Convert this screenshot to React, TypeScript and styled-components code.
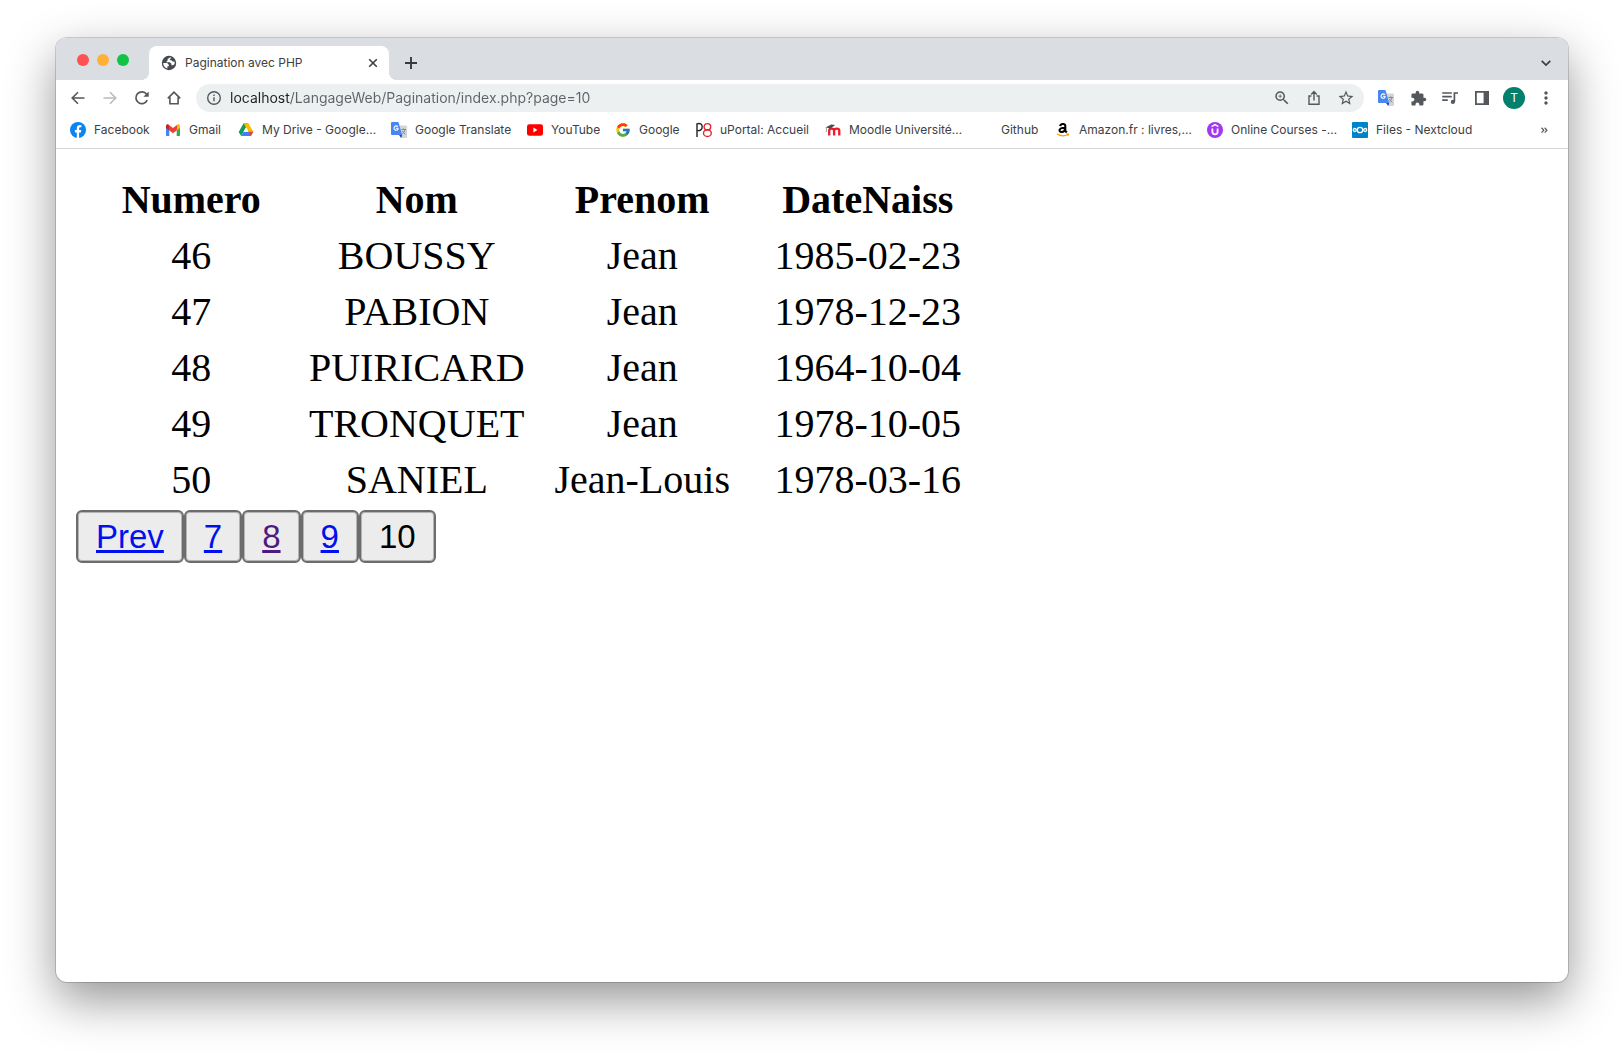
import React from 'react';
import styled, { createGlobalStyle } from 'styled-components';
import { MdExtension, MdMoreVert, MdZoomIn, MdStarBorder } from 'react-icons/md';
import { FcGoogle } from 'react-icons/fc';

const uiFont = `Inter, "Liberation Sans", sans-serif`;

const GlobalStyle = createGlobalStyle`
  *, *::before, *::after { box-sizing: border-box; }
  body { margin: 0; background: #fff; }
  button, input { font: inherit; }
`;

const Desktop = styled.div`
  min-height: 100vh;
  padding: 38px 56px 74px;
  display: flex;
`;

const BrowserWindow = styled.div`
  flex: 1;
  min-width: 0;
  display: flex;
  flex-direction: column;
  border-radius: 11px;
  overflow: hidden;
  background: #fff;
  box-shadow: 0 0 0 1px rgba(0, 0, 0, 0.16), 0 18px 48px rgba(0, 0, 0, 0.42);
  font-family: ${uiFont};
`;

const TabStrip = styled.header`
  display: flex;
  height: 42px;
  padding: 8px 6px 0 21px;
  background: #dadde2;
`;

const WindowControls = styled.div`
  display: flex;
  gap: 8px;
  padding-top: 8px;
  margin-right: 20px;
`;

const ControlDot = styled.button<{ $color: string }>`
  width: 12px;
  height: 12px;
  padding: 0;
  border: 0;
  border-radius: 50%;
  background: ${(p) => p.$color};
`;

const Tab = styled.div`
  position: relative;
  display: flex;
  align-items: center;
  width: 240px;
  height: 34px;
  padding: 0 8px 0 12px;
  gap: 8px;
  border-radius: 8px 8px 0 0;
  background: #fff;

  &::before, &::after {
    content: "";
    position: absolute;
    bottom: 0;
    width: 8px;
    height: 8px;
  }
  &::before {
    right: 100%;
    background: radial-gradient(circle at 0 0, transparent 8px, #fff 8px);
  }
  &::after {
    left: 100%;
    background: radial-gradient(circle at 100% 0, transparent 8px, #fff 8px);
  }
`;

const TabTitle = styled.span`
  flex: 1;
  font-size: 12px;
  line-height: 16px;
  color: #3c4043;
`;

const IconButton = styled.button<{ $size?: number; $color?: string }>`
  display: grid;
  place-items: center;
  flex: none;
  width: ${(p) => p.$size ?? 32}px;
  height: 28px;
  padding: 0;
  border: 0;
  background: none;
  color: ${(p) => p.$color ?? '#54585c'};
`;

const TabButton = styled(IconButton)`
  height: 34px;
`;

const Spacer = styled.div`
  flex: 1;
`;

const Toolbar = styled.div`
  display: flex;
  align-items: center;
  height: 36px;
  padding: 0 6px;
`;

const AddressBar = styled.form`
  flex: 1;
  min-width: 0;
  display: flex;
  align-items: center;
  height: 28px;
  margin: 0 6px;
  padding: 0 2px 0 10px;
  gap: 8px;
  border-radius: 14px;
  background: #edf0f1;
  color: #54585c;
`;

const AddressInput = styled.input`
  flex: 1;
  min-width: 0;
  height: 20px;
  padding: 0;
  border: 0;
  outline: 0;
  font-size: 14px;
  line-height: 20px;
  color: #5f6368;
  background: linear-gradient(to right, #202124 60px, #5f6368 60px);
  background-clip: text;
  -webkit-background-clip: text;
  -webkit-text-fill-color: transparent;
`;

const ActionGroup = styled.div`
  display: flex;
`;

const Avatar = styled.span`
  display: grid;
  place-items: center;
  width: 22px;
  height: 22px;
  border-radius: 50%;
  background: #027f6d;
  color: #fff;
  font-size: 12px;
  line-height: 22px;
`;

const BookmarksBar = styled.nav`
  display: flex;
  align-items: center;
  height: 33px;
  padding: 0 7px 4px 14px;
  border-bottom: 1px solid #d5d7d9;
`;

const Bookmark = styled.a<{ $width: number }>`
  display: flex;
  align-items: center;
  gap: 8px;
  width: ${(p) => p.$width}px;
  font-size: 12px;
  line-height: 16px;
  color: #3c4043;
  text-decoration: none;
  white-space: nowrap;
`;

const BookmarkIcon = styled.span`
  display: grid;
  flex: none;
  width: 16px;
  height: 16px;
`;

const Page = styled.main`
  flex: 1;
  padding: 20px;
  font-family: "Liberation Serif", serif;
  color: #000;
`;

const DataTable = styled.table`
  width: 907px;
  table-layout: fixed;
  border-spacing: 5px;
  font-size: 40px;
  line-height: 46px;
  text-align: center;
`;

const HeadCell = styled.th`
  padding: 3px 0 2px;
`;

const Cell = styled.td`
  padding: 3px 0 2px;
`;

const Pager = styled.nav`
  display: flex;
  font-family: "Liberation Sans", sans-serif;
  font-size: 33px;
  line-height: 38px;
`;

const PagerLink = styled.a<{ $visited?: boolean }>`
  padding: 6px 18px 5px;
  border: 2px solid #6c6c6c;
  border-radius: 6px;
  box-shadow: inset 0 0 0 1px #b4b4b4;
  background: #ececec;
  color: ${(p) => (p.$visited ? '#4f1a80' : '#0010ee')};
  text-decoration: underline;
  text-decoration-thickness: 3px;
`;

const PagerCurrent = styled(PagerLink).attrs({ as: 'button' })`
  color: #000;
  text-decoration: none;
`;

const Line = ({ size = 16, width = 1.6, children }: { size?: number; width?: number; children: React.ReactNode }) => (
  <svg width={size} height={size} viewBox="0 0 16 16" fill="none" stroke="currentColor" strokeWidth={width}>
    {children}
  </svg>
);

const Globe = () => (
  <svg width="16" height="16" viewBox="0 0 16 16">
    <circle cx="8" cy="8" r="7.2" fill="#45494d" />
    <path d="M9.3 2.2 6.6 4v1.5L5 7.2h3.8l1.6 1.5v1.5h1.8l1.3-1.2.3-2.2-2.2-.2-.8-1.2-1.9-.4V4l1.5-1z" fill="#fff" />
    <path d="M2.2 8h3.9l1.7 1.7v1.5H6.4v2.3A5.9 5.9 0 0 1 2.2 8z" fill="#fff" />
  </svg>
);

const FacebookLogo = () => (
  <svg viewBox="0 0 16 16">
    <circle cx="8" cy="8" r="8" fill="#0b84f3" />
    <path d="M6.8 16v-5.5H4.9V8.1h1.9V6.4c0-2.2 1.2-3.3 3.1-3.3l1.5.1v2h-1c-1 0-1.3.6-1.3 1.3v1.6h2.2l-.4 2.4H9.1V16z" fill="#fff" />
  </svg>
);

const GmailLogo = () => (
  <svg viewBox="0 0 16 16">
    <path d="M1 4v9c0 .6.4 1 1 1h2.3V6.6z" fill="#4285f4" />
    <path d="M15 4v9c0 .6-.4 1-1 1h-2.3V6.6z" fill="#34a853" />
    <path d="M11.7 4.3v4.3L15 6V3.9c0-1.6-1.7-2-2.7-1.2z" fill="#fbbc04" />
    <path d="M4.3 8.6V4.3L8 7l3.7-2.7v4.3L8 11.3z" fill="#ea4335" />
    <path d="M1 3.9V6l3.3 2.6V4.3l-.6-1.6C2.6 1.9 1 2.5 1 3.9z" fill="#c5221f" />
    <path d="M3.7 2.7 8 6l4.3-3.3-.6 4.5L8 9.8 4.3 7.2z" fill="#ea4335" />
  </svg>
);

const DriveLogo = () => (
  <svg viewBox="0 0 16 16">
    <path d="M5.6 1.2h4.8L8 5.5 3.1 14 .7 10z" fill="#0f9d58" />
    <path d="M5.6 1.2h4.8l4.9 8.6h-4.8z" fill="#ffba00" />
    <path d="M5.5 9.8h9.8L12.9 14H3.1z" fill="#3f7ef3" />
    <path d="M8 5.5 10.5 9.8h-5z" fill="#fff" />
    <path d="m12.9 14-2.4-4.2h4.8z" fill="#ea4335" />
  </svg>
);

const TranslateLogo = () => (
  <svg width="16" height="16" viewBox="0 0 16 16">
    <path d="M6.5 3.5H15a1 1 0 0 1 1 1V15a1 1 0 0 1-1 1H10z" fill="#d3d5d8" />
    <path d="M8 13h3.2L10.2 16z" fill="#2246c8" />
    <path d="M1 0h6.4l3.8 13H1a1 1 0 0 1-1-1V1a1 1 0 0 1 1-1z" fill="#4a86f2" />
    <path d="M6.9 4.7A2.2 2.2 0 1 0 7 7.4V6.3H4.9" fill="none" stroke="#fff" strokeWidth="1.1" />
    <path d="M10.4 7.5h4.6M12.6 6.4v1.1M14 7.5c-.4 2-1.6 3.6-2.7 4.5M11.2 9l3 3.4" fill="none" stroke="#6e8791" strokeWidth=".9" />
  </svg>
);

const YoutubeLogo = () => (
  <svg viewBox="0 0 16 16">
    <rect y="2.2" width="16" height="11.6" rx="2.4" fill="#f00" />
    <path d="M6.4 5.6v4.8l4-2.4z" fill="#fff" />
  </svg>
);

const PortalLogo = () => (
  <svg viewBox="0 0 16 16" fill="none" strokeWidth="1.4">
    <path d="M1 15V1.8C4 .8 6.2 2 6.2 4.8S4 9 1.4 8.6" stroke="#222" />
    <ellipse cx="11.4" cy="4.8" rx="3.3" ry="3.2" stroke="#e0262d" />
    <ellipse cx="11.4" cy="11.2" rx="3.9" ry="3.3" stroke="#e0262d" />
  </svg>
);

const MoodleLogo = () => (
  <svg viewBox="0 0 16 16" fill="none">
    <path d="M4.2 13.4V8.8c0-2.8 4.9-2.8 4.9 0v4.6M9.1 13.4V8.8c0-2.8 5.2-2.8 5.2 0v4.6" stroke="#ec1c2a" strokeWidth="2.3" />
    <path d="m.6 5.4 5.6-3 4 .6-4.6 3.4z" fill="#4c4c4c" />
    <path d="M1.4 5.6v4.4" stroke="#888" strokeWidth=".8" />
  </svg>
);

const AmazonLogo = () => (
  <svg viewBox="0 0 16 16">
    <path d="M5.2 4.1C5.4 1.8 10.3.9 10.3 4v6M10.1 5.7C3 5.6 3.7 10.2 6.5 10c2-.1 3.4-1.4 3.6-3.2M10 8.6l1.8 1.9" fill="none" stroke="#000" strokeWidth="2.1" />
    <path d="M2 12c3.8 2.3 8 2.3 11.2.4M11.4 12h2.2l-.6 1.9" fill="none" stroke="#f90" strokeWidth="1.1" />
  </svg>
);

const UdemyLogo = () => (
  <svg viewBox="0 0 16 16">
    <circle cx="8" cy="8" r="8" fill="#a435f0" />
    <path d="M5.4 6.4v3.4c0 3.4 5.2 3.4 5.2 0V6.4" fill="none" stroke="#fff" strokeWidth="1.8" />
    <path d="m4.6 4.6 3.4-2 3.4 2" fill="none" stroke="#fff" strokeWidth="1.4" />
  </svg>
);

const NextcloudLogo = () => (
  <svg viewBox="0 0 16 16">
    <rect width="16" height="16" rx="1" fill="#0082c9" />
    <g fill="none" stroke="#fff" strokeWidth="1.3">
      <circle cx="8" cy="8" r="2.7" />
      <circle cx="2.8" cy="8" r="1.5" />
      <circle cx="13.2" cy="8" r="1.5" />
    </g>
  </svg>
);

const bookmarks: { label: string; width: number; icon?: React.ReactNode }[] = [
  { label: 'Facebook', width: 95, icon: <FacebookLogo /> },
  { label: 'Gmail', width: 73, icon: <GmailLogo /> },
  { label: 'My Drive - Google…', width: 153, icon: <DriveLogo /> },
  { label: 'Google Translate', width: 136, icon: <TranslateLogo /> },
  { label: 'YouTube', width: 88, icon: <YoutubeLogo /> },
  { label: 'Google', width: 81, icon: <FcGoogle size={16} /> },
  { label: 'uPortal: Accueil', width: 129, icon: <PortalLogo /> },
  { label: 'Moodle Université…', width: 152, icon: <MoodleLogo /> },
  { label: 'Github', width: 78 },
  { label: 'Amazon.fr : livres,…', width: 152, icon: <AmazonLogo /> },
  { label: 'Online Courses -…', width: 145, icon: <UdemyLogo /> },
  { label: 'Files - Nextcloud', width: 130, icon: <NextcloudLogo /> },
];

const columns = ['Numero', 'Nom', 'Prenom', 'DateNaiss'];

const people = [
  ['46', 'BOUSSY', 'Jean', '1985-02-23'],
  ['47', 'PABION', 'Jean', '1978-12-23'],
  ['48', 'PUIRICARD', 'Jean', '1964-10-04'],
  ['49', 'TRONQUET', 'Jean', '1978-10-05'],
  ['50', 'SANIEL', 'Jean-Louis', '1978-03-16'],
];

export default function App() {
  return (
    <Desktop>
      <GlobalStyle />
      <BrowserWindow>
        <TabStrip>
          <WindowControls>
            <ControlDot $color="#ff514f" aria-label="Close window" />
            <ControlDot $color="#ffb137" aria-label="Minimize window" />
            <ControlDot $color="#0fc445" aria-label="Zoom window" />
          </WindowControls>
          <Tab>
            <Globe />
            <TabTitle>Pagination avec PHP</TabTitle>
            <TabButton $size={16} $color="#3c4043" aria-label="Close tab">
              <Line width={1.6}><path d="m4.2 4.2 7.6 7.6M11.8 4.2l-7.6 7.6" /></Line>
            </TabButton>
          </Tab>
          <TabButton $size={44} $color="#36393d" aria-label="New tab">
            <Line width={1.9}><path d="M8 2v12M2 8h12" /></Line>
          </TabButton>
          <Spacer />
          <TabButton $color="#3c4043" aria-label="Search tabs">
            <Line width={1.8}><path d="m3.7 5.8 4.3 4.3 4.3-4.3" /></Line>
          </TabButton>
        </TabStrip>

        <Toolbar>
          <IconButton aria-label="Back">
            <Line><path d="M14.5 8H2.2M8 2.2 2.2 8 8 13.8" /></Line>
          </IconButton>
          <IconButton $color="#b9bbbd" aria-label="Forward">
            <Line><path d="M1.5 8h12.3M8 2.2 13.8 8 8 13.8" /></Line>
          </IconButton>
          <IconButton aria-label="Reload">
            <Line width={1.7}>
              <path d="M13.2 10.2A5.9 5.9 0 1 1 12.6 4.3L13.6 5.6" />
              <path d="M14.7 1.4v5.4H9.4z" fill="currentColor" stroke="none" />
            </Line>
          </IconButton>
          <IconButton aria-label="Home">
            <Line><path d="M1.8 8.4 8 2.2l6.2 6.2M3.9 7.2v6.6h8.2V7.2" /></Line>
          </IconButton>

          <AddressBar onSubmit={(e) => e.preventDefault()}>
            <Line width={1.4}>
              <circle cx="8" cy="8" r="6.3" />
              <path d="M8 7.2v4.1M8 4.6v1.5" />
            </Line>
            <AddressInput aria-label="Address" defaultValue="localhost/LangageWeb/Pagination/index.php?page=10" />
            <ActionGroup>
              <IconButton type="button" aria-label="Zoom"><MdZoomIn size={18} /></IconButton>
              <IconButton type="button" aria-label="Share">
                <Line width={1.4}><path d="M5.4 6H3v8.3h10V6h-2.4M8 10.5V1.8M5.2 4.4 8 1.6l2.8 2.8" /></Line>
              </IconButton>
              <IconButton type="button" aria-label="Bookmark this page"><MdStarBorder size={18} /></IconButton>
            </ActionGroup>
          </AddressBar>

          <IconButton aria-label="Translate"><TranslateLogo /></IconButton>
          <IconButton aria-label="Extensions"><MdExtension size={17} /></IconButton>
          <IconButton aria-label="Media controls">
            <Line width={1.7}>
              <path d="M.2 3h9.6M.2 6.6h9.6M.2 10.2h5.6M12.4 11.8V3H16" />
              <circle cx="10.9" cy="11.9" r="2.1" fill="currentColor" stroke="none" />
            </Line>
          </IconButton>
          <IconButton aria-label="Side panel">
            <Line width={1.8}>
              <path d="M1.9 1.9h12.2v12.2H1.9z" />
              <path d="M9.6 1.9h4.5v12.2H9.6z" fill="currentColor" stroke="none" />
            </Line>
          </IconButton>
          <IconButton aria-label="Profile"><Avatar>T</Avatar></IconButton>
          <IconButton aria-label="Menu"><MdMoreVert size={20} /></IconButton>
        </Toolbar>

        <BookmarksBar aria-label="Bookmarks">
          {bookmarks.map((b) => (
            <Bookmark key={b.label} href="#" $width={b.width}>
              <BookmarkIcon>{b.icon}</BookmarkIcon>
              {b.label}
            </Bookmark>
          ))}
          <Spacer />
          <IconButton aria-label="More bookmarks">
            <Line size={12} width={1.6}><path d="m3.4 5 3 3.3-3 3.3M7.6 5l3 3.3-3 3.3" /></Line>
          </IconButton>
        </BookmarksBar>

        <Page>
          <DataTable>
            <thead>
              <tr>{columns.map((c) => <HeadCell key={c} scope="col">{c}</HeadCell>)}</tr>
            </thead>
            <tbody>
              {people.map((row) => (
                <tr key={row[0]}>{row.map((value, i) => <Cell key={columns[i]}>{value}</Cell>)}</tr>
              ))}
            </tbody>
          </DataTable>
          <Pager aria-label="Pagination">
            <PagerLink href="#9">Prev</PagerLink>
            <PagerLink href="#7">7</PagerLink>
            <PagerLink href="#8" $visited>8</PagerLink>
            <PagerLink href="#9">9</PagerLink>
            <PagerCurrent>10</PagerCurrent>
          </Pager>
        </Page>
      </BrowserWindow>
    </Desktop>
  );
}
